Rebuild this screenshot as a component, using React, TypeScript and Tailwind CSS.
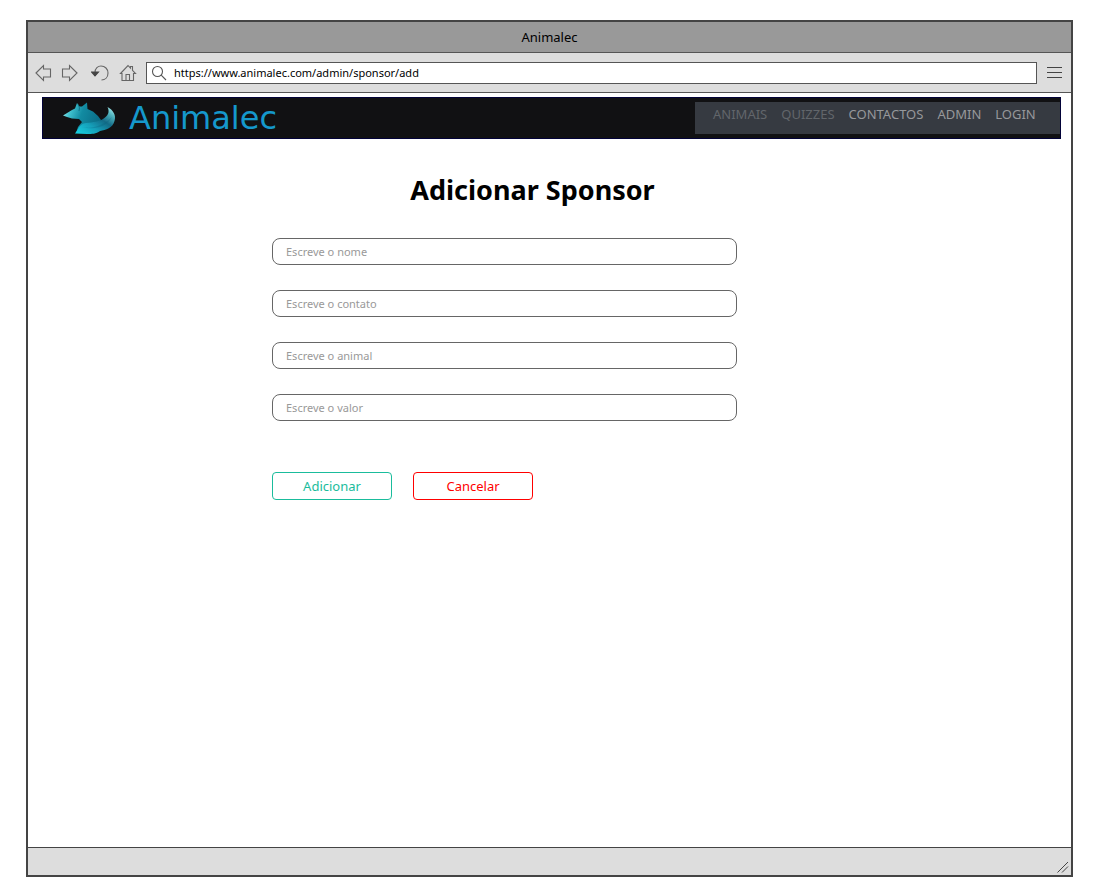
import type { ReactNode } from "react";

const fields = [
  { id: "nome", placeholder: "Escreve o nome" },
  { id: "contato", placeholder: "Escreve o contato" },
  { id: "animal", placeholder: "Escreve o animal" },
  { id: "valor", placeholder: "Escreve o valor" },
];

const links = [
  { label: "ANIMAIS", href: "#animais", active: false },
  { label: "QUIZZES", href: "#quizzes", active: false },
  { label: "CONTACTOS", href: "#contactos", active: true },
  { label: "ADMIN", href: "#admin", active: true },
  { label: "LOGIN", href: "#login", active: true },
];

function ToolButton({ label, children }: { label: string; children: ReactNode }) {
  return (
    <button type="button" aria-label={label} className="shrink-0">
      <svg width="18" height="18" viewBox="0 0 18 18" fill="none" stroke="#666" strokeWidth="1.1">
        {children}
      </svg>
    </button>
  );
}

function FoxLogo() {
  return (
    <svg width="54" height="34" viewBox="0 0 54 34" aria-hidden="true" className="shrink-0">
      <defs>
        <linearGradient id="head" x1="0" y1="0" x2="1" y2="0.3">
          <stop offset="0" stopColor="#b5f4f5" />
          <stop offset="0.25" stopColor="#42c3d0" />
          <stop offset="0.55" stopColor="#128ba2" />
          <stop offset="1" stopColor="#0b7089" />
        </linearGradient>
        <linearGradient id="tail" x1="0" y1="1" x2="1" y2="0">
          <stop offset="0" stopColor="#18d5e6" />
          <stop offset="0.35" stopColor="#159fb9" />
          <stop offset="0.6" stopColor="#136b87" />
          <stop offset="0.8" stopColor="#4fb2bd" />
          <stop offset="1" stopColor="#c2ffff" />
        </linearGradient>
      </defs>
      <path
        d="M0 14.500 L9 9 L12 7.500 L14 2 L16.500 5.500 L19 5.500 L24 1.500 L24.500 8 L30 10.500 L35 15 L38 19 L34 26 L20 30 L13 32 L15 26 L19 21 L16 18 L9 17.500 L4 16 Z"
        fill="url(#head)"
      />
      <path
        d="M44.500 6 C50 9 53.500 14 51.500 20 C49.500 27 43 29 37 30 C33 33 29 33 24 33 L12 32.500 C15 29 16 23 23 22 C31 21 35 21 40 18 C45 15 47 11 44.500 6 Z"
        fill="url(#tail)"
      />
      <path d="M19 26 C29 28 38 26 49 16 C43 27 30 29 19 26 Z" fill="#0b617e" opacity="0.3" />
      <path d="M15 3 L16.500 7 L16 10" stroke="#065c72" strokeWidth="1" fill="none" opacity="0.6" />
    </svg>
  );
}

function BrowserToolbar() {
  return (
    <div className="flex h-10 items-center border-b border-[#555] bg-[#ddd] pr-[9px] pl-[7px]">
      <div className="flex items-center gap-2">
        <ToolButton label="Voltar">
          <path d="M1 9 L8.500 1.500 V5 H15.500 V13 H8.500 V16.500 Z" />
        </ToolButton>
        <ToolButton label="Avançar">
          <path d="M16 9 L8.500 1.500 V5 H1.500 V13 H8.500 V16.500 Z" />
        </ToolButton>
      </div>
      <div className="ml-3 flex items-center gap-[10px]">
        <ToolButton label="Recarregar">
          <path d="M4 8.500 C4 4 7 2 10 2 C14 2 17 5 17 9 C17 13.500 14 16 10.500 16" />
          <path d="M0.500 8 H7.500 L4 12 Z" fill="#444" stroke="#444" />
        </ToolButton>
        <ToolButton label="Início">
          <path d="M1.500 9.500 L9 1.500 L11.500 4.200 V2.500 H13.500 V6.300 L16.500 9.500 H14.500 V16.500 H3 V9.500 Z M7 16.500 V10.500 H10.500 V16.500" />
        </ToolButton>
      </div>
      <label
        htmlFor="url"
        className="ml-[9px] flex h-[22px] min-w-0 flex-1 items-center gap-[7px] border border-[#555] bg-white pl-1"
      >
        <svg width="16" height="16" viewBox="0 0 16 16" fill="none" stroke="#555" strokeWidth="1.1" className="shrink-0">
          <circle cx="6.500" cy="6.500" r="5" />
          <path d="M10.200 10.200 L15 15" />
        </svg>
        <input
          id="url"
          type="text"
          aria-label="Endereço"
          defaultValue="https://www.animalec.com/admin/sponsor/add"
          className="min-w-0 flex-1 bg-transparent text-[11px] leading-5 text-black outline-none"
        />
      </label>
      <button type="button" aria-label="Menu" className="ml-[10px] flex w-[15px] flex-col gap-1">
        <span className="h-px bg-[#444]" />
        <span className="h-px bg-[#444]" />
        <span className="h-px bg-[#444]" />
      </button>
    </div>
  );
}

function SiteHeader() {
  return (
    <header className="mt-1 mr-[10px] ml-[14px] flex h-[42px] items-center justify-between border border-[#020238] bg-[#111113] pl-5">
      <a href="#inicio" className="flex items-center gap-3">
        <FoxLogo />
        <span className="font-['DejaVu_Sans',sans-serif] text-[32px] leading-8 text-[#1598cc]">Animalec</span>
      </a>
      <nav className="flex h-8 w-[365px] gap-[14px] bg-[#363a41] pt-1 pl-[18px] text-[13px] leading-4">
        {links.map((link) => (
          <a key={link.label} href={link.href} className={link.active ? "text-[#96989b]" : "text-[#62666b]"}>
            {link.label}
          </a>
        ))}
      </nav>
    </header>
  );
}

export default function App() {
  return (
    <div className="flex min-h-screen flex-col bg-white pt-5 pr-[27px] pl-[26px] font-['Noto_Sans',sans-serif]">
      <div className="flex flex-1 flex-col border-2 border-[#444]">
        <div className="flex h-[31px] items-center justify-center border-b border-[#555] bg-[#999] pt-0.5 text-[13px] text-black">
          Animalec
        </div>
        <BrowserToolbar />
        <SiteHeader />
        <main className="flex-1 pt-[31px] pl-[244px]">
          <div className="max-w-[521px]">
            <h1 className="text-center text-[27px] leading-10 font-bold text-black">Adicionar Sponsor</h1>
            <form className="mt-7 max-w-[465px]">
              <div className="flex flex-col gap-[25px]">
                {fields.map((field) => (
                  <input
                    key={field.id}
                    id={field.id}
                    name={field.id}
                    type="text"
                    aria-label={field.placeholder}
                    placeholder={field.placeholder}
                    className="h-[27px] w-full rounded-lg border border-[#666] px-[13px] text-[11px] placeholder:text-[#999]"
                  />
                ))}
              </div>
              <div className="mt-[51px] flex gap-[21px]">
                <button type="submit" className="h-7 w-[120px] rounded border border-[#1abc9c] pt-0.5 text-[13px] text-[#1abc9c]">
                  Adicionar
                </button>
                <button type="button" className="h-7 w-[120px] rounded border border-[#f00] pt-0.5 text-[13px] text-[#f00]">
                  Cancelar
                </button>
              </div>
            </form>
          </div>
        </main>
        <footer className="flex h-7 items-end justify-end border-t border-[#444] bg-[#ddd] p-[2px]">
          <svg width="12" height="12" viewBox="0 0 12 12" stroke="#444" strokeWidth="1" aria-hidden="true">
            <path d="M0.500 11.500 L11 1 M5 11.500 L11 5.500" />
          </svg>
        </footer>
      </div>
    </div>
  );
}
